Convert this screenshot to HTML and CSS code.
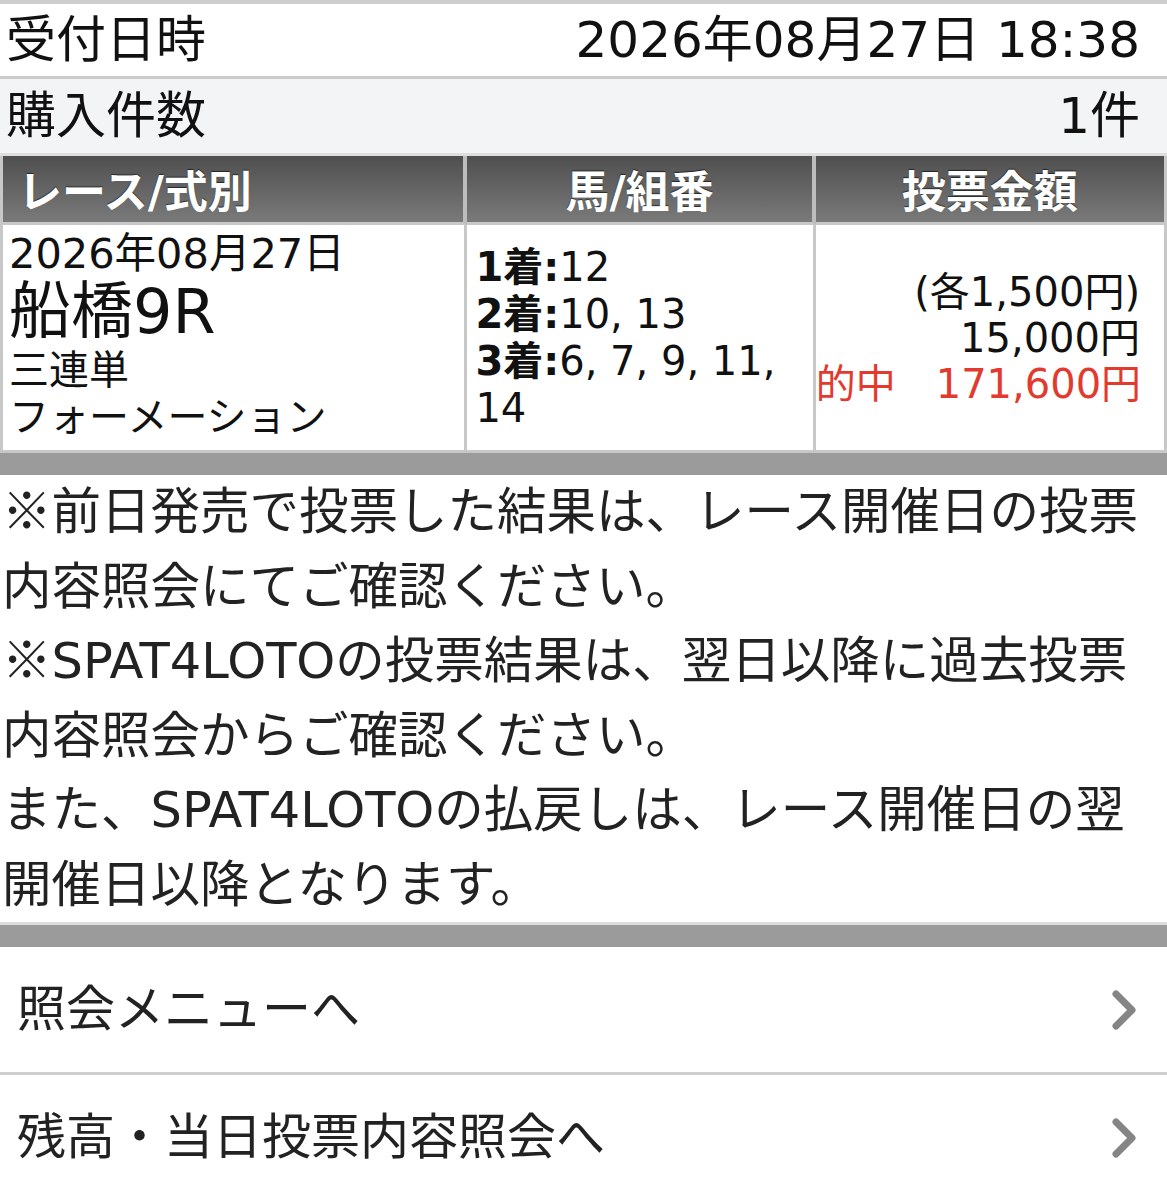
FILE: index.html
```html
<!DOCTYPE html>
<html lang="ja">
<head>
<meta charset="utf-8">
<title>投票内容照会</title>
<link rel="stylesheet" href="styles.css">
</head>
<body>
<div class="page">
  <div class="info-row info-white">
    <span class="label">受付日時</span>
    <span class="value">2026年08月27日 18:38</span>
  </div>
  <div class="info-row info-gray">
    <span class="label">購入件数</span>
    <span class="value">1件</span>
  </div>

  <table class="bets">
    <colgroup>
      <col class="col-race">
      <col class="col-horse">
      <col class="col-amount">
    </colgroup>
    <thead>
      <tr>
        <th class="th-left">レース/式別</th>
        <th>馬/組番</th>
        <th class="th-last">投票金額</th>
      </tr>
    </thead>
    <tbody>
      <tr>
        <td class="race">
          <div class="line date">2026年08月27日</div>
          <div class="venue">船橋9R</div>
          <div class="line">三連単</div>
          <div class="line">フォーメーション</div>
        </td>
        <td class="horses">
          <div class="line"><b>1着:</b>12</div>
          <div class="line"><b>2着:</b>10, 13</div>
          <div class="line"><b>3着:</b>6, 7, 9, 11, 14</div>
        </td>
        <td class="amount">
          <div class="line">(各1,500円)</div>
          <div class="line">15,000円</div>
          <div class="line hit">的中　171,600円</div>
        </td>
      </tr>
    </tbody>
  </table>

  <div class="bar"></div>

  <div class="notes">
    <p><span class="jp">※</span>前日発売で投票した結果は、レース開催日の投票内容照会にてご確認ください。</p>
    <p><span class="jp">※</span>SPAT4LOTOの投票結果は、翌日以降に過去投票内容照会からご確認ください。</p>
    <p>また、SPAT4LOTOの払戻しは、レース開催日の翌開催日以降となります。</p>
  </div>

  <div class="bar bar-notes"></div>

  <nav class="menu">
    <a class="menu-item" href="#">
      <span>照会メニューへ</span>
      <svg class="chev" viewBox="0 0 26 42" width="26" height="42" aria-hidden="true"><path d="M5 5 L21 21 L5 37" fill="none" stroke="#858585" stroke-width="7" stroke-linecap="round" stroke-linejoin="round"/></svg>
    </a>
    <a class="menu-item" href="#">
      <span>残高・当日投票内容照会へ</span>
      <svg class="chev" viewBox="0 0 26 42" width="26" height="42" aria-hidden="true"><path d="M5 5 L21 21 L5 37" fill="none" stroke="#858585" stroke-width="7" stroke-linecap="round" stroke-linejoin="round"/></svg>
    </a>
  </nav>
</div>
</body>
</html>
```

FILE: styles.css
```css
html, body {
  margin: 0;
  padding: 0;
  background: #ffffff;
}

body {
  font-family: "DejaVu Sans", "Noto Sans CJK JP", sans-serif;
  color: #111111;
}

.jp {
  font-family: "Noto Sans CJK JP", sans-serif;
  line-height: 1;
}

.page {
  width: 1167px;
  border-top: 4px solid #cdcdcd;
}

/* top info rows */
.info-row {
  display: flex;
  justify-content: space-between;
  align-items: center;
  font-size: 50px;
  line-height: 1;
  padding: 0 27px 0 6px;
  box-sizing: border-box;
}

.info-row .value {
  margin-left: auto;
}

.info-white {
  height: 75px;
  padding-bottom: 1px;
  background: #ffffff;
  border-bottom: 3px solid #cbcbcb;
}

.info-gray {
  height: 77px;
  background: #f2f4f5;
  border-bottom: 3px solid #dedede;
}

/* bets table */
.bets {
  width: 100%;
  border-collapse: separate;
  border-spacing: 0;
  table-layout: fixed;
  border-left: 3px solid #c8c8c8;
  border-right: 3px solid #c8c8c8;
}

.col-race { width: 40%; }
.col-horse { width: 30%; }
.col-amount { width: 30%; }

.bets th {
  height: 66px;
  padding: 0;
  background: linear-gradient(#4f4f4f, #7a7a7a);
  color: #ffffff;
  font-size: 44px;
  font-weight: bold;
  text-align: center;
  text-shadow: 0 -1px 1px rgba(0, 0, 0, 0.6);
  border-right: 4px solid #bdbdbd;
  border-bottom: 3px solid #c8c8c8;
}

.bets th.th-left {
  text-align: left;
  padding-left: 15px;
}

.bets th.th-last {
  border-right: 0;
}

.bets td {
  height: 228px;
  box-sizing: border-box;
  padding: 0;
  font-size: 40px;
  line-height: 47px;
  border-right: 3px solid #c8c8c8;
  border-bottom: 3px solid #c8c8c8;
  vertical-align: middle;
}

.bets td.race {
  vertical-align: top;
  padding: 5px 4px 0 6px;
}

.bets td.race .date {
  font-size: 41.5px;
}

.bets td.race .venue {
  font-size: 62px;
  line-height: 70px;
}

.bets td.horses {
  padding: 0 8px 0 8px;
}

.bets td.horses b {
  font-weight: bold;
}

.bets td.amount {
  border-right: 0;
  text-align: right;
  padding-right: 24px;
  line-height: 46px;
}

.bets td.amount .line {
  white-space: nowrap;
}

.hit {
  color: #e23a2e;
}

/* gray separator bars */
.bar {
  height: 22px;
  background: #9b9b9b;
}

.bar-notes {
  border-top: 3px solid #dcdcdc;
}

/* notes */
.notes {
  padding: 0 10px 0 2px;
  font-size: 49.5px;
  line-height: 74.5px;
  color: #222222;
}

.notes p {
  margin: 0;
}

/* menu */
.menu {
  display: flex;
  flex-direction: column;
}

.menu-item {
  display: flex;
  justify-content: space-between;
  align-items: center;
  height: 128px;
  box-sizing: border-box;
  padding: 0 30px 0 17px;
  font-size: 49px;
  line-height: 1;
  color: #222222;
  text-decoration: none;
  border-bottom: 3px solid #cfcfcf;
}

.chev {
  display: block;
  flex: none;
}
```
